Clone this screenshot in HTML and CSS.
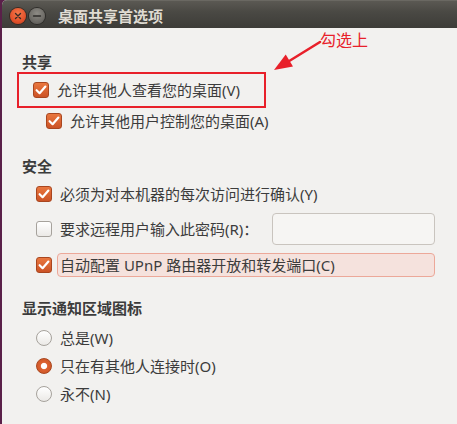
FILE: index.html
```html
<!DOCTYPE html>
<html lang="zh">
<head>
  <meta charset="UTF-8">
  <title>桌面共享首选项</title>
  <link rel="stylesheet" href="styles.css">
</head>
<body>

<div class="window">
  <!-- 标题栏 -->
  <div class="titlebar">
    <span class="wbtn close">
      <svg width="16" height="16" viewBox="0 0 16 16"><path d="M5.5 5.5 L10.5 10.5 M10.5 5.5 L5.5 10.5" stroke="#3a2a24" stroke-width="1.4" stroke-linecap="round"/></svg>
    </span>
    <span class="wbtn min">
      <svg width="16" height="16" viewBox="0 0 16 16"><path d="M4.5 8 H11.5" stroke="#2e2d2a" stroke-width="1.4" stroke-linecap="round"/></svg>
    </span>
    <span class="title">桌面共享首选项</span>
  </div>

  <div class="content">
    <!-- 共享 -->
    <div class="heading">共享</div>
    <div class="marked">
      <label class="row"><span class="check on"><svg width="16" height="16" viewBox="0 0 16 16"><path d="M3.6 8.2 L6.6 11.2 L12.4 4.6" fill="none" stroke="#fff" stroke-width="2.2" stroke-linecap="round" stroke-linejoin="round"/></svg></span>允许其他人查看您的桌面(V)</label>
    </div>
    <label class="row sub"><span class="check on"><svg width="16" height="16" viewBox="0 0 16 16"><path d="M3.6 8.2 L6.6 11.2 L12.4 4.6" fill="none" stroke="#fff" stroke-width="2.2" stroke-linecap="round" stroke-linejoin="round"/></svg></span>允许其他用户控制您的桌面(A)</label>

    <!-- 安全 -->
    <div class="heading gap-top">安全</div>
    <div class="section">
      <label class="row r-confirm"><span class="check on"><svg width="16" height="16" viewBox="0 0 16 16"><path d="M3.6 8.2 L6.6 11.2 L12.4 4.6" fill="none" stroke="#fff" stroke-width="2.2" stroke-linecap="round" stroke-linejoin="round"/></svg></span>必须为对本机器的每次访问进行确认(Y)</label>
      <div class="row r-pass">
        <span class="check"></span>
        <span>要求远程用户输入此密码(R)：</span>
        <span class="entry"></span>
      </div>
      <label class="row r-upnp"><span class="check on"><svg width="16" height="16" viewBox="0 0 16 16"><path d="M3.6 8.2 L6.6 11.2 L12.4 4.6" fill="none" stroke="#fff" stroke-width="2.2" stroke-linecap="round" stroke-linejoin="round"/></svg></span><span class="hl">自动配置 UPnP 路由器开放和转发端口(C)</span></label>
    </div>

    <!-- 显示通知区域图标 -->
    <div class="heading gap-top2">显示通知区域图标</div>
    <div class="section radios">
      <label class="row radio-row"><span class="radio"></span>总是(W)</label>
      <label class="row radio-row"><span class="radio on"></span>只在有其他人连接时(O)</label>
      <label class="row radio-row"><span class="radio"></span>永不(N)</label>
    </div>
  </div>

  <!-- 标注 -->
  <div class="note">勾选上</div>
  <svg class="arrow" width="60" height="40" viewBox="0 0 60 40">
    <path d="M49 3 L15 24" stroke="#e8202a" stroke-width="2.6" stroke-linecap="round"/>
    <polygon points="3,31 14.7,15.6 22,27.6" fill="#e8202a"/>
  </svg>
</div>

</body>
</html>
```

FILE: styles.css
```css
body { margin: 0; background: #5a2049; font-family: "Noto Sans", "Noto Sans CJK SC", sans-serif; overflow: hidden; }
.window { position: relative; margin-left: 2px; height: 424px; background: #f2f1ef; border-top-left-radius: 5px; overflow: hidden; color: #3c3c3c; }

.titlebar {
  height: 28px; display: flex; align-items: center; padding-left: 8px;
  background: linear-gradient(#5b5953, #4a4944 40%, #3d3c38);
  border-top: 1px solid #6a6862; box-sizing: border-box;
}
.wbtn { width: 16px; height: 16px; border-radius: 50%; display: flex; margin-top: 3px; }
.wbtn.close { background: radial-gradient(circle at 50% 35%, #f47a4c, #e4512a 60%, #b43e1f); box-shadow: 0 0 0 1px #3a2a22; }
.wbtn.min { margin-left: 3px; background: radial-gradient(circle at 50% 35%, #8d8b85, #6d6b66 60%, #55534f); box-shadow: 0 0 0 1px #2e2d2a; }
.title { margin-left: 13px; margin-top: 3px; color: #dfdbd2; font-weight: bold; font-size: 15px; line-height: 18px; }

.content { padding: 24px 0 0 20px; font-size: 15px; }
.heading { font-weight: bold; line-height: 20px; height: 20px; }
.gap-top { margin-top: 22px; }
.gap-top2 { margin-top: 21px; }

.row { display: flex; align-items: center; gap: 8px; line-height: 20px; }
.marked { margin-left: -5px; width: 231px; height: 32px; border: 2px solid #e8202a; padding-left: 14px; display: flex; }
.marked .row { height: 32px; white-space: nowrap; }
.row.sub { height: 26px; margin-left: 24px; }

.section { padding-left: 14px; width: 399px; }
.r-confirm { height: 26px; margin-top: 5px; }
.r-pass { height: 32px; margin-top: 6px; }
.r-upnp { height: 24px; margin-top: 8px; }
.entry {
  margin-left: auto; width: 161px; height: 30px; border: 1px solid #c9c4be; border-radius: 4px;
  background: #f6f5f3;
}
.hl {
  flex: 1; margin-left: -3px; height: 22px; padding-left: 2px; border: 1px solid #eca899; border-radius: 4px;
  background: #f5e2dd; line-height: 22px;
}

.radios { margin-top: 6px; }
.radio-row { height: 28px; }

.check {
  width: 16px; height: 16px; box-sizing: border-box; border-radius: 3px; flex: none; display: flex;
  border: 1px solid #a6a29c; background: linear-gradient(#ffffff, #ebe9e6);
}
.check.on { border-color: #a9461f; background: linear-gradient(#e9773f, #cc5326); }
.check svg { margin: -1px; }

.radio {
  width: 16px; height: 16px; box-sizing: border-box; border-radius: 50%; flex: none;
  border: 1px solid #a6a29c; background: linear-gradient(#ffffff, #ebe9e6);
}
.radio.on {
  border-color: #a9461f; background: radial-gradient(circle, #fff 0 2.6px, #f5d6c8 3px, #dc6232 3.6px, #c9511f);
}

.note { position: absolute; left: 318px; top: 30px; color: #e8202a; font-size: 16px; line-height: 20px; }
.arrow { position: absolute; left: 269px; top: 39px; }
```
